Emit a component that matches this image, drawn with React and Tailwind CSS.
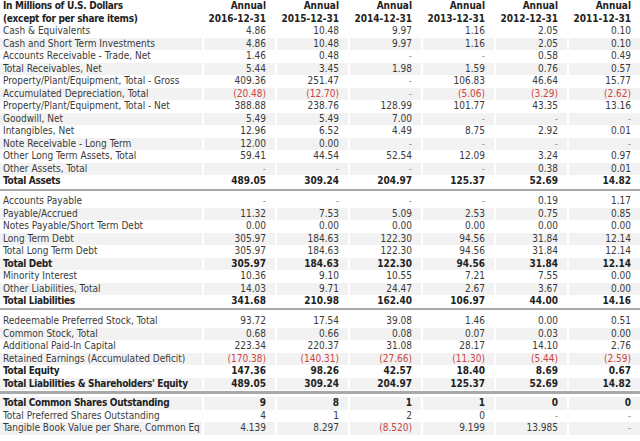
import React from "react";

const S1 = [
  ["Cash & Equivalents", ["4.86", "10.48", "9.97", "1.16", "2.05", "0.10"]],
  ["Cash and Short Term Investments", ["4.86", "10.48", "9.97", "1.16", "2.05", "0.10"]],
  ["Accounts Receivable - Trade, Net", ["1.46", "0.48", "-", "-", "0.58", "0.49"]],
  ["Total Receivables, Net", ["5.44", "3.45", "1.98", "1.59", "0.76", "0.57"]],
  ["Property/Plant/Equipment, Total - Gross", ["409.36", "251.47", "-", "106.83", "46.64", "15.77"]],
  ["Accumulated Depreciation, Total", ["(20.48)", "(12.70)", "-", "(5.06)", "(3.29)", "(2.62)"]],
  ["Property/Plant/Equipment, Total - Net", ["388.88", "238.76", "128.99", "101.77", "43.35", "13.16"]],
  ["Goodwill, Net", ["5.49", "5.49", "7.00", "-", "-", "-"]],
  ["Intangibles, Net", ["12.96", "6.52", "4.49", "8.75", "2.92", "0.01"]],
  ["Note Receivable - Long Term", ["12.00", "0.00", "-", "-", "-", "-"]],
  ["Other Long Term Assets, Total", ["59.41", "44.54", "52.54", "12.09", "3.24", "0.97"]],
  ["Other Assets, Total", ["-", "-", "-", "-", "0.38", "0.01"]],
  ["Total Assets", ["489.05", "309.24", "204.97", "125.37", "52.69", "14.82"], true],
];

const S2 = [
  ["Accounts Payable", ["-", "-", "-", "-", "0.19", "1.17"]],
  ["Payable/Accrued", ["11.32", "7.53", "5.09", "2.53", "0.75", "0.85"]],
  ["Notes Payable/Short Term Debt", ["0.00", "0.00", "0.00", "0.00", "0.00", "0.00"]],
  ["Long Term Debt", ["305.97", "184.63", "122.30", "94.56", "31.84", "12.14"]],
  ["Total Long Term Debt", ["305.97", "184.63", "122.30", "94.56", "31.84", "12.14"]],
  ["Total Debt", ["305.97", "184.63", "122.30", "94.56", "31.84", "12.14"], true],
  ["Minority Interest", ["10.36", "9.10", "10.55", "7.21", "7.55", "0.00"]],
  ["Other Liabilities, Total", ["14.03", "9.71", "24.47", "2.67", "3.67", "0.00"]],
  ["Total Liabilities", ["341.68", "210.98", "162.40", "106.97", "44.00", "14.16"], true],
];

const S3 = [
  ["Redeemable Preferred Stock, Total", ["93.72", "17.54", "39.08", "1.46", "0.00", "0.51"]],
  ["Common Stock, Total", ["0.68", "0.66", "0.08", "0.07", "0.03", "0.00"]],
  ["Additional Paid-In Capital", ["223.34", "220.37", "31.08", "28.17", "14.10", "2.76"]],
  ["Retained Earnings (Accumulated Deficit)", ["(170.38)", "(140.31)", "(27.66)", "(11.30)", "(5.44)", "(2.59)"]],
  ["Total Equity", ["147.36", "98.26", "42.57", "18.40", "8.69", "0.67"], true],
  ["Total Liabilities & Shareholders' Equity", ["489.05", "309.24", "204.97", "125.37", "52.69", "14.82"], true],
];

const S4 = [
  ["Total Common Shares Outstanding", ["9", "8", "1", "1", "0", "0"], true],
  ["Total Preferred Shares Outstanding", ["4", "1", "2", "0", "-", "-"]],
  ["Tangible Book Value per Share, Common Eq", ["4.139", "8.297", "(8.520)", "9.199", "13.985", "-"]],
];

const GRID = "grid grid-cols-[202px_repeat(6,71px)] gap-x-[2px]";

function Row({ label, values, bold, shade }) {
  const bg = shade ? "bg-[#f2f2f2]" : "bg-white";
  return (
    <div className={`${GRID} h-[12.5px] leading-[12.5px]`}>
      <div className={`${bg} pl-[3px] whitespace-nowrap ${bold ? "font-bold text-[#222] tracking-[-0.3px]" : "text-[#3a3a3a]"}`}>{label}</div>
      {values.map((v, i) => {
        const neg = v.startsWith("(");
        const dash = v === "-";
        const color = neg ? "text-[#c44]" : dash ? "text-[#999]" : bold ? "text-[#222]" : "text-[#3a3a3a]";
        return (
          <div key={i} className={`${bg} text-right pr-[9px] ${color} ${bold ? "font-bold" : ""}`}>
            {v}
          </div>
        );
      })}
    </div>
  );
}

function Section({ rows, startShade = false }) {
  return (
    <div>
      {rows.map((r, i) => (
        <Row key={i} label={r[0]} values={r[1]} bold={r[2]} shade={(i % 2 === 1) !== startShade} />
      ))}
    </div>
  );
}

export default function App() {
  const years = ["2016-12-31", "2015-12-31", "2014-12-31", "2013-12-31", "2012-12-31", "2011-12-31"];
  return (
    <div className="w-[640px] h-[441px] bg-white overflow-hidden text-[10px] text-[#333]" style={{ fontFamily: '"DejaVu Sans Condensed", "DejaVu Sans", sans-serif' }}>
      <div className={`${GRID} font-bold text-[#222] leading-[12.5px]`}>
        <div className="pl-[3px] tracking-[-0.3px] whitespace-nowrap">
          <div>In Millions of U.S. Dollars</div>
          <div>(except for per share items)</div>
        </div>
        {years.map((y) => (
          <div key={y} className="text-right pr-[9px]">
            <div>Annual</div>
            <div>{y}</div>
          </div>
        ))}
      </div>
      <Section rows={S1} />
      <div className="h-[7.5px] pt-[1.5px]"><div className="h-[2px] bg-[#a8a8a8]" /></div>
      <Section rows={S2} />
      <div className="h-[7.5px] pt-[0.5px]"><div className="h-[2px] bg-[#a8a8a8]" /></div>
      <Section rows={S3} />
      <div className="h-[7px] pt-[1px]"><div className="h-[3px] bg-[#a8a8a8]" /></div>
      <Section rows={S4} startShade={true} />
    </div>
  );
}
